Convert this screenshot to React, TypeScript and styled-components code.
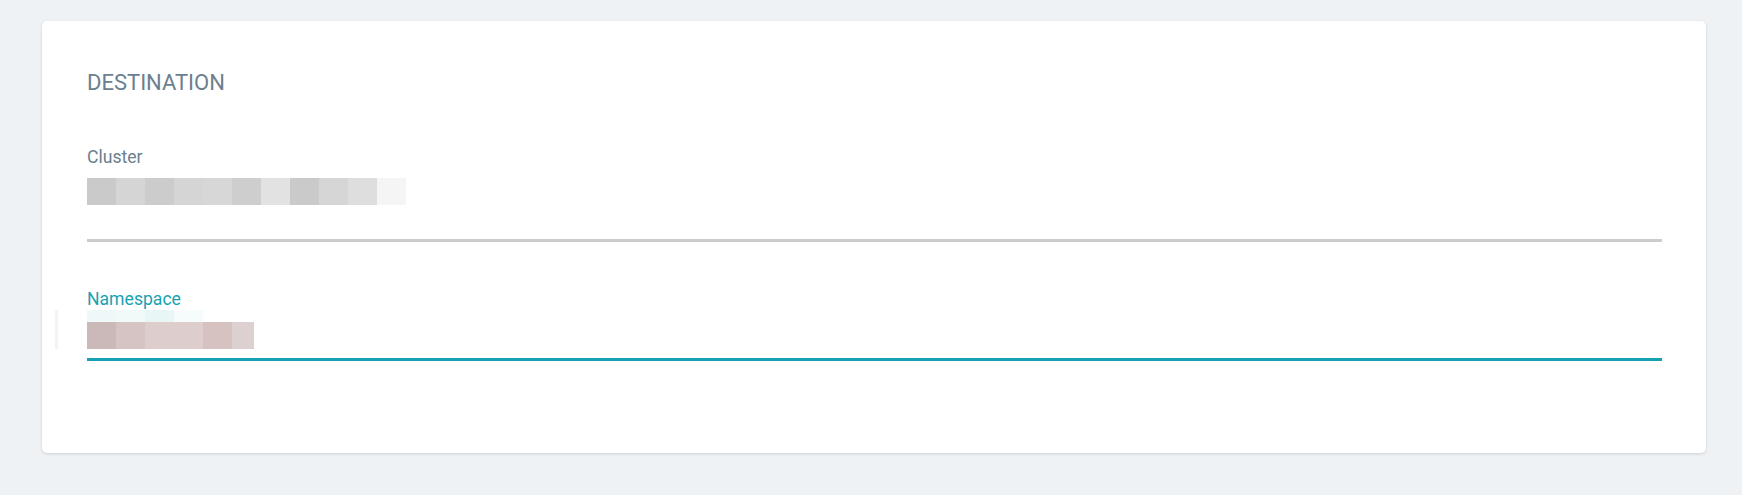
import styled, { createGlobalStyle } from 'styled-components';

const GlobalStyle = createGlobalStyle`
  html, body {
    margin: 0;
    padding: 0;
    background: #eef2f5;
    font-family: Roboto, 'Liberation Sans', sans-serif;
  }
`;

const Page = styled.div`
  padding: 21px 36px 43px 42px;
`;

const Card = styled.section`
  background: #ffffff;
  border-radius: 5px;
  box-shadow: 0 1px 3px rgba(0, 0, 0, 0.14);
  padding: 49px 44px 92px 45px;
`;

const SectionTitle = styled.h3`
  margin: 0 0 51px;
  font-size: 22px;
  line-height: 26px;
  font-weight: 400;
  color: #6b7f8e;
`;

const Field = styled.div<{ $spaced?: boolean }>`
  display: flex;
  flex-direction: column;
  margin-top: ${p => (p.$spaced ? '47px' : '0')};
`;

const Label = styled.label<{ $active?: boolean }>`
  font-size: 17.6px;
  line-height: 21px;
  color: ${p => (p.$active ? '#17a2b2' : '#6b7f8e')};
`;

const ValueArea = styled.div`
  position: relative;
  display: flex;
  flex-direction: column;
`;

const Caret = styled.span`
  position: absolute;
  left: -32px;
  top: 0;
  bottom: 0;
  width: 3px;
  background: #f0f5f6;
`;

const PixelRow = styled.div<{ $h: number; $mt?: number }>`
  display: flex;
  height: ${p => p.$h}px;
  margin-top: ${p => p.$mt ?? 0}px;
`;

const Pixel = styled.span<{ $c: string; $w?: number }>`
  width: ${p => p.$w ?? 29}px;
  height: 100%;
  background: ${p => p.$c};
`;

const Underline = styled.div<{ $active?: boolean; $mt: number }>`
  height: 3px;
  margin-top: ${p => p.$mt}px;
  background: ${p => (p.$active ? '#15a1b3' : '#cccccc')};
`;

const clusterPixels = [
  '#cacaca', '#d5d5d5', '#cccccc', '#d5d5d5', '#d7d7d7', '#cecece',
  '#e2e2e2', '#cacaca', '#d6d6d6', '#dedede', '#f5f5f5',
];

const namespaceGhost = ['#eef8f8', '#f1f9f9', '#e9f6f6', '#f6fbfb'];
const namespacePixels = ['#cbb8b8', '#d6c4c4', '#ddcdcc', '#ddcdcc', '#d5c2c1', '#ddd0d0'];

export default function App() {
  return (
    <>
      <GlobalStyle />
      <Page>
        <Card>
          <SectionTitle>DESTINATION</SectionTitle>

          <Field>
            <Label>Cluster</Label>
            <PixelRow $h={27} $mt={10}>
              {clusterPixels.map((c, i) => (
                <Pixel key={i} $c={c} />
              ))}
            </PixelRow>
            <Underline $mt={34} />
          </Field>

          <Field $spaced>
            <Label $active>Namespace</Label>
            <ValueArea>
              <Caret />
              <PixelRow $h={12}>
                {namespaceGhost.map((c, i) => (
                  <Pixel key={i} $c={c} />
                ))}
              </PixelRow>
              <PixelRow $h={27}>
                {namespacePixels.map((c, i) => (
                  <Pixel key={i} $c={c} $w={i === namespacePixels.length - 1 ? 22 : 29} />
                ))}
              </PixelRow>
            </ValueArea>
            <Underline $active $mt={9} />
          </Field>
        </Card>
      </Page>
    </>
  );
}
